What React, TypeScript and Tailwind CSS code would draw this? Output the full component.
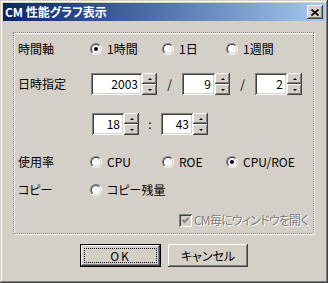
const raised =
  "shadow-[inset_-1px_-1px_#404040,inset_1px_1px_#ffffff,inset_-2px_-2px_#808080,inset_2px_2px_#d4d0c8]";
const sunken =
  "shadow-[inset_1px_1px_#808080,inset_-1px_-1px_#ffffff,inset_2px_2px_#404040,inset_-2px_-2px_#d4d0c8]";

function Radio({ label, checked = false }: { label: string; checked?: boolean }) {
  return (
    <div className="flex items-center gap-[5px]">
      <span className="flex w-3 h-3 shrink-0 rounded-full border border-t-[#808080] border-l-[#808080] border-r-white border-b-white">
        <span className="flex w-full h-full items-center justify-center rounded-full border border-t-[#404040] border-l-[#404040] border-r-[#d4d0c8] border-b-[#d4d0c8] bg-white">
          {checked && <span className="w-1 h-1 rounded-full bg-black" />}
        </span>
      </span>
      <span>{label}</span>
    </div>
  );
}

function Spin({ value, w }: { value: string; w: string }) {
  return (
    <div className="flex h-[22px] shrink-0">
      <div className={`${w} h-full bg-white ${sunken} flex items-center justify-end pr-[4px]`}>{value}</div>
      <div className="flex flex-col w-[15px] h-full">
        <div className={`h-[11px] bg-[#d4d0c8] ${raised} flex items-center justify-center`}>
          <span className="w-0 h-0 border-x-[2px] border-x-transparent border-b-[2px] border-b-black" />
        </div>
        <div className={`h-[11px] bg-[#d4d0c8] ${raised} flex items-center justify-center`}>
          <span className="w-0 h-0 border-x-[2px] border-x-transparent border-t-[2px] border-t-black" />
        </div>
      </div>
    </div>
  );
}

export default function App() {
  return (
    <div
      className={`w-[328px] h-[283px] bg-[#d4d0c8] flex flex-col text-[12px] leading-[16px] text-black font-['Noto_Sans_CJK_JP',sans-serif] [font-feature-settings:'palt'] shadow-[inset_-1px_-1px_#404040,inset_1px_1px_#d4d0c8,inset_-2px_-2px_#808080,inset_2px_2px_#ffffff]`}
    >
      {/* title bar */}
      <div className="mx-[3px] mt-[3px] h-[18px] flex items-center bg-linear-to-r from-[#0a246a] to-[#a6caf0]">
        <span className="ml-[2px] text-white font-bold">CM 性能グラフ表示</span>
        <div className={`ml-auto mr-[2px] w-[16px] h-[14px] bg-[#d4d0c8] ${raised} flex items-center justify-center`}>
          <svg width="8" height="7" viewBox="0 0 8 7">
            <path d="M0.5 0.5 L7.5 6.5 M7.5 0.5 L0.5 6.5" stroke="black" strokeWidth="1.7" />
          </svg>
        </div>
      </div>

      {/* group box */}
      <div className="ml-[13px] mt-[11px] w-[301px] h-[202px] border border-dotted border-[#808080] shadow-[inset_1px_1px_#ffffff,1px_1px_#ffffff] flex flex-col pl-[4px] pt-[8px]">
        <div className="flex items-center h-[16px]">
          <span className="w-[72px]">時間軸</span>
          <div className="w-[72px]"><Radio label="1時間" checked /></div>
          <div className="w-[64px]"><Radio label="1日" /></div>
          <Radio label="1週間" />
        </div>

        <div className="flex items-center mt-[16px]">
          <span className="w-[73px]">日時指定</span>
          <Spin value="2003" w="w-[51px]" />
          <span className="w-[25px] text-center">/</span>
          <Spin value="9" w="w-[33px]" />
          <span className="w-[25px] text-center">/</span>
          <Spin value="2" w="w-[32px]" />
        </div>

        <div className="flex items-center mt-[18px] pl-[74px]">
          <Spin value="18" w="w-[32px]" />
          <span className="w-[22px] text-center">:</span>
          <Spin value="43" w="w-[32px]" />
        </div>

        <div className="flex items-center h-[16px] mt-[19px]">
          <span className="w-[72px]">使用率</span>
          <div className="w-[72px]"><Radio label="CPU" /></div>
          <div className="w-[64px]"><Radio label="ROE" /></div>
          <Radio label="CPU/ROE" checked />
        </div>

        <div className="flex items-center h-[16px] mt-[12px]">
          <span className="w-[72px]">コピー</span>
          <Radio label="コピー残量" />
        </div>

        <div className="flex items-center h-[16px] mt-[14px] pl-[161px] gap-[2px]">
          <span className={`w-[13px] h-[13px] shrink-0 bg-[#d4d0c8] ${sunken} flex items-center justify-center`}>
            <svg width="7" height="7" viewBox="0 0 7 7">
              <path d="M0.5 3 L2.5 5 L6.5 1" stroke="#808080" strokeWidth="1.8" fill="none" />
            </svg>
          </span>
          <span className="whitespace-nowrap tracking-[-0.8px] text-[#808080] [text-shadow:1px_1px_0_#ffffff]">
            CM毎にウィンドウを開く
          </span>
        </div>
      </div>

      {/* buttons */}
      <div className="flex mt-[10px] ml-[80px] gap-[7px]">
        <div className="w-[81px] h-[23px] border border-black">
          <div className={`w-full h-full bg-[#d4d0c8] ${raised} p-[3px]`}>
            <div className="w-full h-full border border-dotted border-black flex items-center justify-center tracking-[2px]">
              OK
            </div>
          </div>
        </div>
        <div className={`w-[80px] h-[23px] bg-[#d4d0c8] ${raised} flex items-center justify-center`}>
          キャンセル
        </div>
      </div>
    </div>
  );
}
